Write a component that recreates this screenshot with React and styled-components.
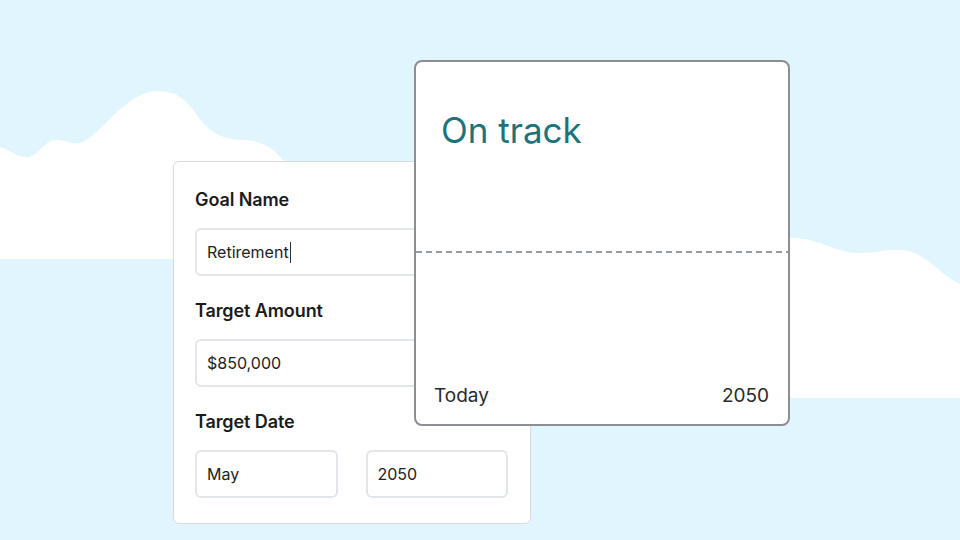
import React from 'react';
import styled, { createGlobalStyle } from 'styled-components';

function App() {
    return (
        <>
            <GlobalStyle />
            <Stage>
                <Clouds viewBox="0 0 960 540" preserveAspectRatio="none">
                    <path
                        fill="#fff"
                        d="M0,147 C10,150 18,158 28,157 C38,156 44,141 55,140 C65,139 70,145 80,143 C98,139 125,91 158,91 C182,91 190,106 200,119 C210,132 222,140 245,140 C264,141 276,150 286,164 L420,164 L420,259 L0,259 Z"
                    />
                    <path
                        fill="#fff"
                        d="M400,240 L792,238 C815,237 835,253 860,253 C878,253 886,249 902,250 C926,252 940,275 960,284 L960,398 L400,398 Z"
                    />
                </Clouds>

                <FormCard>
                    <Section>
                        <Label>Goal Name</Label>
                        <Field>Retirement<Caret /></Field>
                    </Section>
                    <Section>
                        <Label>Target Amount</Label>
                        <Field>$850,000</Field>
                    </Section>
                    <Section>
                        <Label>Target Date</Label>
                        <DateRow>
                            <Field>May</Field>
                            <Field>2050</Field>
                        </DateRow>
                    </Section>
                </FormCard>

                <TrackCard>
                    <TrackTitle>On track</TrackTitle>
                    <GoalLine />
                    <AxisRow>
                        <span>Today</span>
                        <span>2050</span>
                    </AxisRow>
                </TrackCard>
            </Stage>
        </>
    );
}

const GlobalStyle = createGlobalStyle`
    html, body {
        margin:0;
        padding:0;
        overflow:hidden;
    }
    body {
        font-family: Inter, "Noto Sans", "Liberation Sans", sans-serif;
        -webkit-font-smoothing: antialiased;
    }
`;
const Stage = styled.div`
    position:relative;
    box-sizing:border-box;
    width:960px;
    height:540px;
    padding:161px 0 0 173px;
    background:#e0f5fd;
    overflow:hidden;
`;
const Clouds = styled.svg`
    position:absolute;
    left:0;
    top:0;
    width:960px;
    height:540px;
`;
const FormCard = styled.div`
    position:relative;
    box-sizing:border-box;
    width:358px;
    padding:27px 22px 25px 21px;
    background:#fff;
    border:1px solid #d6dbe0;
    border-radius:6px;
    display:flex;
    flex-direction:column;
    gap:24px;
`;
const Section = styled.div`
    display:flex;
    flex-direction:column;
    gap:17px;
`;
const Label = styled.div`
    font-size:18px;
    line-height:22px;
    font-weight:600;
    color:#1b1b1b;
    letter-spacing:-0.1px;
`;
const Field = styled.div`
    box-sizing:border-box;
    height:48px;
    display:flex;
    align-items:center;
    padding:0 10px;
    border:2px solid #e2e6eb;
    border-radius:6px;
    font-size:16px;
    color:#222;
`;
const Caret = styled.span`
    display:inline-block;
    width:1px;
    height:21px;
    margin-left:1px;
    background:#333;
`;
const DateRow = styled.div`
    display:grid;
    grid-template-columns:1fr 1fr;
    gap:28px;
`;
const TrackCard = styled.div`
    position:absolute;
    left:414px;
    top:60px;
    box-sizing:border-box;
    width:376px;
    height:366px;
    display:flex;
    flex-direction:column;
    background:#fff;
    border:2px solid #8b8e92;
    border-radius:8px;
`;
const TrackTitle = styled.div`
    padding:47px 0 0 25px;
    font-size:35px;
    line-height:42px;
    font-weight:400;
    color:#1d7379;
`;
const GoalLine = styled.div`
    height:2px;
    margin-top:100px;
    background:repeating-linear-gradient(to right, #969aa1 0 6px, transparent 6px 10px);
`;
const AxisRow = styled.div`
    margin-top:auto;
    padding:0 19px 17px 18px;
    display:flex;
    justify-content:space-between;
    font-size:19px;
    line-height:23px;
    color:#2a2a2a;
`;

export default App;
